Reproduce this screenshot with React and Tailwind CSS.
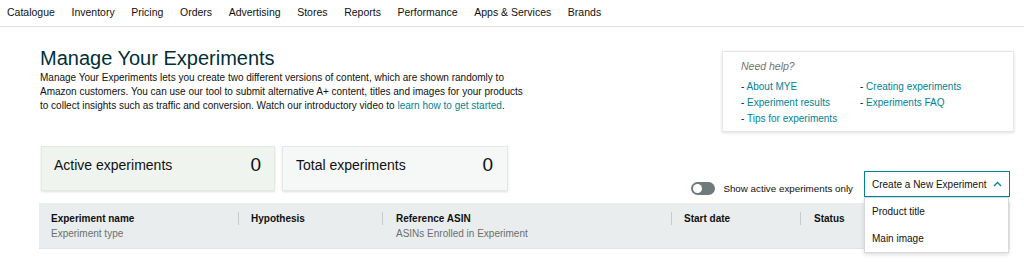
import React from "react";

const nav = ["Catalogue", "Inventory", "Pricing", "Orders", "Advertising", "Stores", "Reports", "Performance", "Apps & Services", "Brands"];

function Col({ width, title, sub, divider = true, pad = "pl-[12px]" }) {
  return (
    <div className="flex items-start shrink-0" style={width ? { width } : undefined}>
      {divider && <div className="w-px h-[13px] mt-[1px] bg-[#c6cbcb] shrink-0" />}
      <div className={pad}>
        <div className="text-[10px] leading-[15px] font-bold text-[#0f1111] whitespace-nowrap">{title}</div>
        {sub && <div className="text-[10px] leading-[15px] text-[#6a6f6f] whitespace-nowrap">{sub}</div>}
      </div>
    </div>
  );
}

export default function App() {
  return (
    <div className="w-[1024px] h-[272px] overflow-hidden bg-white font-['Liberation_Sans',Arial,sans-serif] text-[#0f1111]">
      <nav className="h-[27px] border-b border-[#dcdfdf] flex items-center gap-[16.6px] pl-[7px] text-[10.5px] text-[#0f1111]">
        {nav.map((n) => (
          <span key={n} className="whitespace-nowrap">{n}</span>
        ))}
      </nav>

      <div className="pl-[40px] pr-[10px]">
        <div className="flex justify-between items-start mt-[20px]">
          <div>
            <h1 className="text-[20px] leading-[22px] text-[#002f36]">Manage Your Experiments</h1>
            <p className="mt-[2px] w-[490px] text-[10px] leading-[14px] text-[#0f1111]">
              Manage Your Experiments lets you create two different versions of content, which are shown randomly to Amazon customers. You can use our tool to submit alternative A+ content, titles and images for your products to collect insights such as traffic and conversion. Watch our introductory video to{" "}
              <span className="text-[#008296]">learn how to get started</span>.
            </p>
          </div>
          <div className="mt-[4px] w-[292px] h-[81px] border border-[#e3e6e6] shadow-[0_1px_3px_rgba(0,0,0,0.12)] bg-white pl-[18px] pt-[6px]">
            <div className="text-[10.5px] leading-[16px] italic text-[#6f7373]">Need help?</div>
            <div className="mt-[5px] grid grid-cols-[119px_1fr] text-[10px] leading-[16px]">
              <div>
                <div><span className="text-[#0f1111]">- </span><span className="text-[#008296]">About MYE</span></div>
                <div><span className="text-[#0f1111]">- </span><span className="text-[#008296]">Experiment results</span></div>
                <div><span className="text-[#0f1111]">- </span><span className="text-[#008296]">Tips for experiments</span></div>
              </div>
              <div>
                <div><span className="text-[#0f1111]">- </span><span className="text-[#008296]">Creating experiments</span></div>
                <div><span className="text-[#0f1111]">- </span><span className="text-[#008296]">Experiments FAQ</span></div>
              </div>
            </div>
          </div>
        </div>

        <div className="flex justify-between items-start mt-[14px]">
          <div className="flex gap-[7px] ml-[1px]">
            <div className="w-[234px] h-[45px] bg-[#eff5ee] border border-[#e4e9e4] shadow-[0_1px_2px_rgba(0,0,0,0.12)] flex justify-between items-center pl-[12px] pr-[13px] pb-[6px]">
              <span className="text-[14px] text-[#0f1111]">Active experiments</span>
              <span className="text-[19px] text-[#0f1111]">0</span>
            </div>
            <div className="w-[226px] h-[45px] bg-[#f6f7f7] border border-[#e6e8e8] shadow-[0_1px_2px_rgba(0,0,0,0.12)] flex justify-between items-center pl-[13px] pr-[14px] pb-[6px]">
              <span className="text-[14px] text-[#0f1111]">Total experiments</span>
              <span className="text-[19px] text-[#0f1111]">0</span>
            </div>
          </div>

          <div className="flex items-start mt-[25px] mr-[4px]">
            <div className="flex items-center mt-[11px] mr-[11px]">
              <div className="w-[24px] h-[13px] rounded-full bg-[#6f7a7a] flex items-center pl-[2px]">
                <div className="w-[9px] h-[9px] rounded-full bg-white" />
              </div>
              <span className="ml-[8px] text-[9.8px] leading-[13px] text-[#0f1111] whitespace-nowrap">Show active experiments only</span>
            </div>
            <div className="relative w-[146px]">
              <div className="h-[26px] border border-[#008296] bg-white flex items-center justify-between pl-[7px] pr-[7px]">
                <span className="text-[10px] text-[#0f1111] whitespace-nowrap">Create a New Experiment</span>
                <svg width="9" height="6" viewBox="0 0 9 6" fill="none">
                  <polyline points="1,5 4.5,1.5 8,5" stroke="#008296" strokeWidth="1.3" />
                </svg>
              </div>
              <div className="absolute top-full left-0 w-[145px] h-[56px] bg-white border border-[#d5d9d9] shadow-[0_2px_4px_rgba(0,0,0,0.12)] z-10 flex flex-col">
                <div className="h-[28px] flex items-center pl-[7px] text-[10px] text-[#0f1111]">Product title</div>
                <div className="h-[28px] flex items-center pl-[7px] text-[10px] text-[#0f1111]">Main image</div>
              </div>
            </div>
          </div>
        </div>

        <div className="mt-[6px] -ml-[1px] mr-[4px] h-[46px] bg-[#eaeded] border-b border-[#dfe3e3] flex items-start pt-[7.5px]">
          <Col width={199} title="Experiment name" sub="Experiment type" divider={false} pad="pl-[12px]" />
          <Col width={144} title="Hypothesis" />
          <Col width={289} title="Reference ASIN" sub="ASINs Enrolled in Experiment" pad="pl-[13px]" />
          <Col width={129} title="Start date" />
          <Col title="Status" pad="pl-[13px]" />
        </div>
      </div>
    </div>
  );
}
